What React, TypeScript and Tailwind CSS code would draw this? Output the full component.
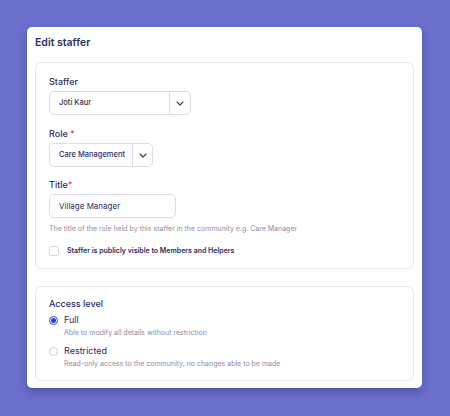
import { useState } from "react"

function Chevron() {
  return (
    <svg width="8" height="5" viewBox="0 0 8 5" fill="none">
      <path d="M1 1l3 3 3-3" stroke="#3b3a66" strokeWidth="1.1" strokeLinecap="round" strokeLinejoin="round" />
    </svg>
  )
}

function SelectBox({ value, width, textWidth }: { value: string; width: string; textWidth: string }) {
  return (
    <div className={`flex h-[24px] ${width} items-stretch rounded-[5px] border border-[#dddbe8] bg-white`}>
      <div className={`flex ${textWidth} items-center whitespace-nowrap pl-[9px] text-[7.5px] font-medium text-[#2e2c5e]`}>
        {value}
      </div>
      <div className="flex flex-1 items-center justify-center border-l border-[#dddbe8]">
        <Chevron />
      </div>
    </div>
  )
}

function Radio({ checked }: { checked: boolean }) {
  return (
    <span
      className={`flex h-[9px] w-[9px] shrink-0 items-center justify-center rounded-full border ${
        checked ? "border-[#2747e0]" : "border-[#cfcddb]"
      } bg-white`}
    >
      {checked && <span className="h-[5px] w-[5px] rounded-full bg-[#1f3fe0]" />}
    </span>
  )
}

export default function App() {
  const [access, setAccess] = useState<"full" | "restricted">("full")
  const [visible, setVisible] = useState(false)

  return (
    <div className="min-h-[416px] bg-[#6a70cc] px-[27px] pt-[27px] font-['Inter',sans-serif] text-[#2e2c5e]">
      <div className="w-[395px] rounded-[5px] bg-white px-[8px] pt-[6px] pb-[7px] shadow-[0_4px_10px_rgba(30,30,90,0.35)]">
        <h1 className="mb-[9px] text-[10.5px] leading-[20px] font-semibold">Edit staffer</h1>

        {/* staffer details */}
        <div className="rounded-[6px] border border-[#e8e7f0] px-[13px] pt-[11px] pb-[10px]">
          <div className="text-[9px] leading-[16px] font-medium">Staffer</div>
          <div className="mt-[1px]">
            <SelectBox value="Joti Kaur" width="w-[142px]" textWidth="w-[119px]" />
          </div>

          <div className="mt-[11px] text-[9px] leading-[16px] font-medium">
            Role <span className="text-[#e5484d]">*</span>
          </div>
          <div className="mt-[1px]">
            <SelectBox value="Care Management" width="w-[104px]" textWidth="w-[82px]" />
          </div>

          <div className="mt-[10px] text-[9px] leading-[16px] font-medium">
            Title<span className="text-[#e5484d]">*</span>
          </div>
          <input
            defaultValue="Village Manager"
            className="mt-[1px] block h-[24px] w-[127px] rounded-[5px] border border-[#dddbe8] px-[9px] text-[8px] text-[#2e2c5e] outline-none"
          />
          <p className="mt-[4px] text-[7px] leading-[14px] text-[#8d8ba8]">
            The title of the role held by this staffer in the community e.g. Care Manager
          </p>

          <label className="mt-[8px] flex h-[14px] cursor-pointer items-center gap-[8px]">
            <input
              type="checkbox"
              checked={visible}
              onChange={(e) => setVisible(e.target.checked)}
              className="h-[10px] w-[10px] appearance-none rounded-[2px] border border-[#d8d6e3] bg-white checked:bg-[#1f3fe0]"
            />
            <span className="text-[7px] font-semibold">Staffer is publicly visible to Members and Helpers</span>
          </label>
        </div>

        {/* access level */}
        <div className="mt-[17px] rounded-[6px] border border-[#e8e7f0] px-[13px] pt-[10px] pb-[10px]">
          <div className="text-[9px] leading-[14px] font-medium">Access level</div>

          <button type="button" onClick={() => setAccess("full")} className="mt-[3px] block text-left">
            <div className="flex h-[12px] items-center gap-[6px]">
              <Radio checked={access === "full"} />
              <span className="text-[9px]">Full</span>
            </div>
            <div className="pl-[15px] text-[7px] leading-[13px] text-[#8d8ba8]">
              Able to modify all details without restriction
            </div>
          </button>

          <button type="button" onClick={() => setAccess("restricted")} className="mt-[6px] block text-left">
            <div className="flex h-[12px] items-center gap-[6px]">
              <Radio checked={access === "restricted"} />
              <span className="text-[9px]">Restricted</span>
            </div>
            <div className="pl-[15px] text-[7px] leading-[13px] text-[#8d8ba8]">
              Read-only access to the community, no changes able to be made
            </div>
          </button>
        </div>
      </div>
    </div>
  )
}
